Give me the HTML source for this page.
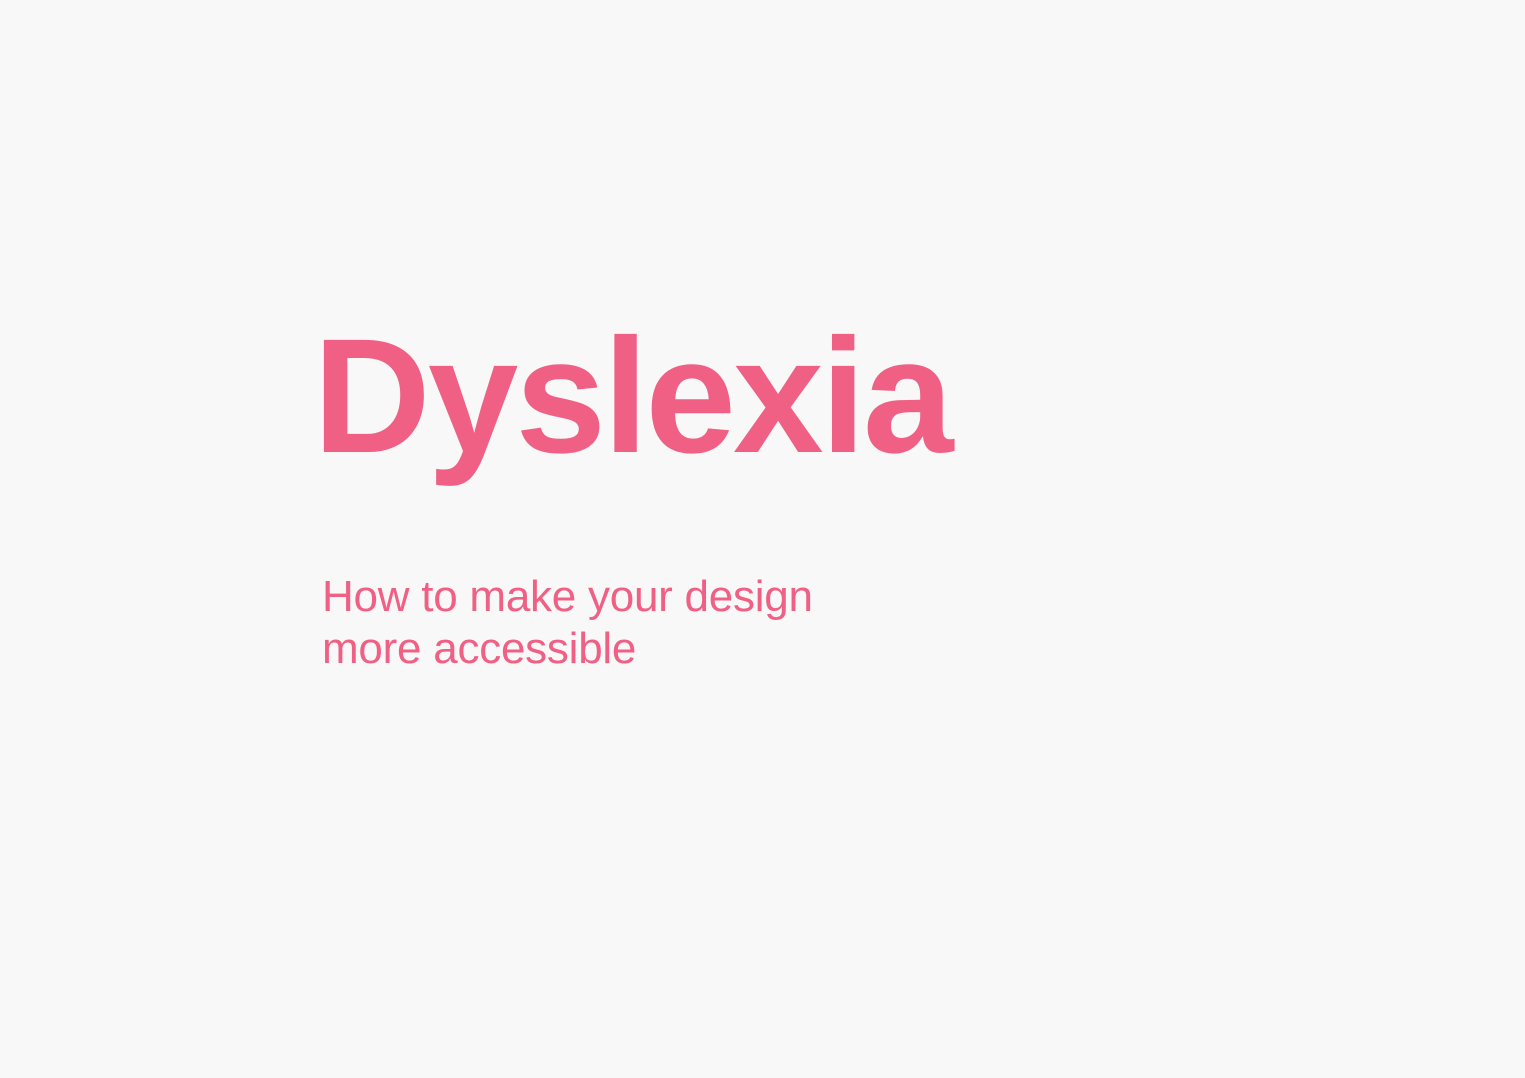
<!DOCTYPE html>
<html><head><meta charset="utf-8"><style>
html,body{margin:0;padding:0;width:1525px;height:1078px;background:#f7f8f7;overflow:hidden;font-family:"Liberation Sans",Arial,sans-serif;color:#f06085}
.t{position:absolute;left:313px;top:314px;font-size:163px;line-height:1;font-weight:bold;letter-spacing:-3px;margin:0}
.s{position:absolute;left:322px;top:571px;font-size:44px;line-height:52px;margin:0;font-weight:normal;letter-spacing:-0.25px}
</style></head><body>
<h1 class="t">Dyslexia</h1>
<p class="s">How to make your design<br>more accessible</p>
</body></html>
